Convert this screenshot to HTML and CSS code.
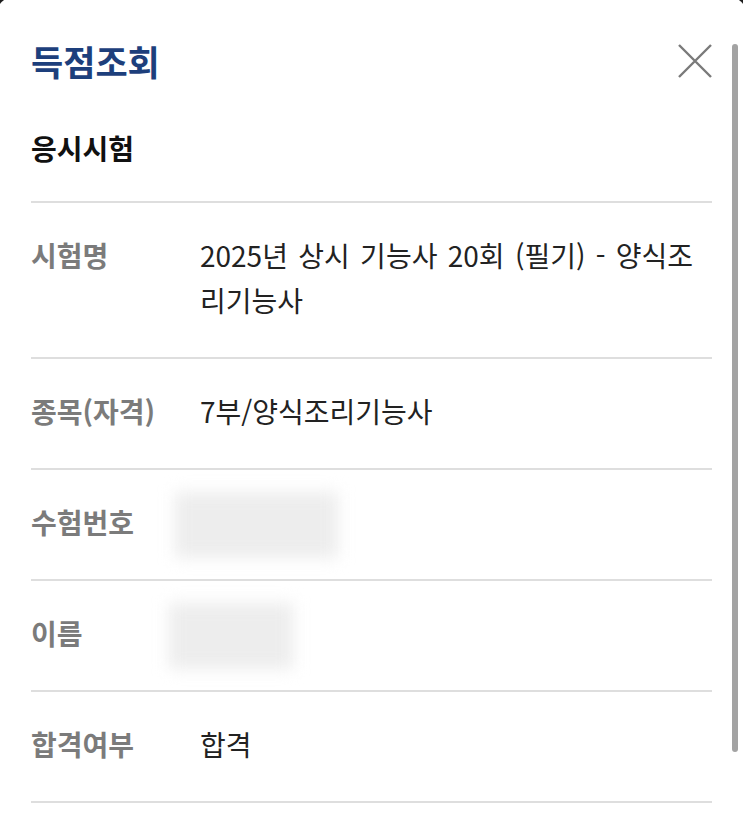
FILE: index.html
```html
<!DOCTYPE html>
<html lang="ko">
<head>
  <meta charset="UTF-8">
  <title>득점조회</title>
  <link rel="stylesheet" href="styles.css">
</head>
<body>

<div class="sheet">
  <div class="sheet-head">
    <h2>득점조회</h2>
    <button class="close-btn" aria-label="닫기">
      <svg width="34" height="34" viewBox="0 0 34 34">
        <path d="M1 1 L33 33 M33 1 L1 33" stroke="#7a7a7a" stroke-width="2.4" fill="none"/>
      </svg>
    </button>
  </div>

  <h3 class="section-title">응시시험</h3>

  <dl class="info-list">
    <div class="info-row">
      <dt>시험명</dt>
      <dd>2025년 상시 기능사 20회 (필기) - 양식조리기능사</dd>
    </div>
    <div class="info-row">
      <dt>종목(자격)</dt>
      <dd>7부/양식조리기능사</dd>
    </div>
    <div class="info-row">
      <dt>수험번호</dt>
      <dd><span class="masked masked-num"></span></dd>
    </div>
    <div class="info-row">
      <dt>이름</dt>
      <dd><span class="masked masked-name"></span></dd>
    </div>
    <div class="info-row">
      <dt>합격여부</dt>
      <dd>합격</dd>
    </div>
  </dl>
</div>

<div class="scroll-thumb"></div>

</body>
</html>
```

FILE: styles.css
```css
html {
  overflow: hidden;
}

body {
  margin: 0;
  background-color: #1c1c1c;
  font-family: "Noto Sans CJK KR", "Noto Sans", sans-serif;
  color: #222;
}

.sheet {
  margin: -4px -4px 0;
  padding: 43px 35px 60px;
  background-color: #fff;
  border-radius: 20px 20px 0 0;
  min-height: 840px;
}

.sheet-head {
  display: flex;
  justify-content: space-between;
  align-items: center;
}

h2 {
  margin: 0;
  font-size: 35px;
  line-height: 44px;
  font-weight: 700;
  color: #1d3f7c;
}

.close-btn {
  display: flex;
  width: 34px;
  height: 34px;
  padding: 0;
  border: none;
  background: none;
  cursor: pointer;
}

.section-title {
  margin: 47px 0 0;
  padding-bottom: 35px;
  font-size: 28px;
  line-height: 36px;
  font-weight: 700;
  color: #111;
  border-bottom: 2px solid #dedede;
}

.info-list {
  margin: 0;
}

.info-row {
  display: flex;
  padding: 30px 0 34px;
  border-bottom: 2px solid #dedede;
  font-size: 28px;
  line-height: 45px;
}

.info-row dt {
  flex: 0 0 169px;
  font-weight: 700;
  color: #7b7b7b;
}

.info-row dd {
  flex: 1;
  margin: 0;
  color: #222;
  word-spacing: 2.5px;
}

.masked {
  display: block;
  height: 66px;
  margin: -8px 0 -13px;
  background-color: #ededed;
  filter: blur(8px);
}

.masked-num {
  width: 163px;
  margin-left: -25px;
}

.masked-name {
  width: 124px;
  margin-left: -31px;
}

.scroll-thumb {
  position: fixed;
  top: 44px;
  right: 5px;
  width: 6px;
  height: 708px;
  border-radius: 3px;
  background-color: #a3a3a3;
}
```
